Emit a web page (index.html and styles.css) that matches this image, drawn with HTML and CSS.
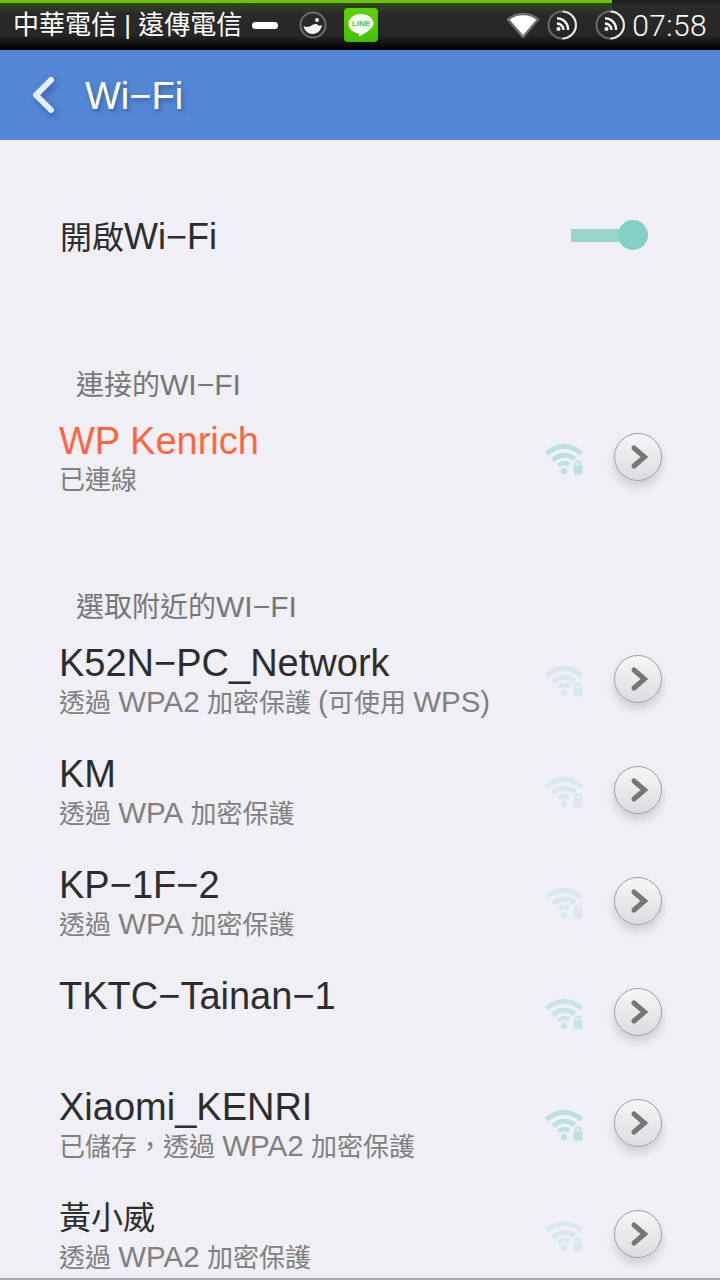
FILE: index.html
```html
<!DOCTYPE html>
<html lang="zh-Hant">
<head>
<meta charset="UTF-8" />
<meta name="viewport" content="width=device-width, initial-scale=1" />
<title>Wi-Fi</title>
<link rel="stylesheet" href="styles.css">
</head>
<body>

<svg class="defs" width="0" height="0">
  <symbol id="wifiLock" viewBox="0 0 40 34">
    <g fill="none" stroke="currentColor" stroke-linecap="butt">
      <path d="M2.5 10.5Q20 -4 37.500 10.500" stroke-width="5" />
      <path d="M9 17Q20 8 31 16" stroke-width="5" />
      <path d="M14.500 22.500Q20 18 25 21.500" stroke-width="4.500" />
    </g>
    <circle cx="20" cy="28" r="3.200" fill="currentColor" />
    <path fill="currentColor" d="M30.500 22.500v-1.500a3.500 3.500 0 0 1 7 0v1.500a1.500 1.500 0 0 1 1 1.500v5.500a2 2 0 0 1-2 2h-5a2 2 0 0 1-2-2V24a1.500 1.500 0 0 1 1-1.500zm2 0h3v-1.500a1.500 1.500 0 0 0-3 0z" />
  </symbol>
  <symbol id="chevron" viewBox="0 0 48 48">
    <path d="M20 15l10.500 9-10.500 9" fill="none" stroke="#767676" stroke-width="5" stroke-linecap="round" stroke-linejoin="miter" />
  </symbol>
  <symbol id="rss" viewBox="0 0 30 30">
    <circle cx="15" cy="15" r="13.500" fill="none" stroke="#6a6a6a" stroke-width="2" />
    <path d="M15.500 1.500A13.500 13.500 0 0 1 15.500 28.500" fill="none" stroke="#e8e8e8" stroke-width="2" />
    <g fill="none" stroke="#fff" stroke-width="2.300">
      <path d="M10 8.500c6-.5 11.500 5 11 11.500" />
      <path d="M10 13.500c3.500 0 6.500 3 6.500 6.500" />
    </g>
    <circle cx="11.500" cy="19" r="2" fill="#fff" />
  </symbol>
</svg>

<div class="page">

  <div class="status-bar">
    <div class="progress"></div>
    <span class="carrier">中華電信 | 遠傳電信</span>
    <span class="dash"></span>
    <svg class="ic-eye" width="28" height="28" viewBox="0 0 28 28">
      <circle cx="14" cy="14" r="12.500" fill="none" stroke="#6e6e6e" stroke-width="2" />
      <path d="M4.500 15c3 1.500 5.500 1 8-.5s5-2 6.500-.5c1 1 2.500 1 4 0-.5 5-4.500 9-9.500 9-4.500 0-8-3.200-9-8z" fill="#f2f2f2" />
      <circle cx="18" cy="9" r="2" fill="#f2f2f2" />
    </svg>
    <span class="line-badge">
      <svg width="30" height="28" viewBox="0 0 30 28">
        <path d="M15 3C7.800 3 2.500 7.300 2.500 12.800c0 4.900 4.200 8.900 9.900 9.700.8.200.6.900.4 2.200 0 .6.500.8 1.300.3 2.500-1.500 12.900-6.500 13.400-12.200C27.500 7.300 22.200 3 15 3z" fill="#fff" />
      </svg>
      <span class="line-text">LINE</span>
    </span>
    <svg class="ic-signal" width="36" height="30" viewBox="0 0 36 30">
      <path d="M18 27L3 9.500C11 2 25 2 33 9.500z" fill="#fff" stroke="#6e6e6e" stroke-width="2.500" stroke-linejoin="round" />
    </svg>
    <svg class="ic-rss-a" width="30" height="30"><use href="#rss" /></svg>
    <svg class="ic-rss-b" width="30" height="30"><use href="#rss" /></svg>
    <span class="clock">07:58</span>
  </div>

  <div class="app-bar">
    <svg class="back" width="26" height="38" viewBox="0 0 26 38">
      <path d="M21 4L6 19l15 15" fill="none" stroke="#e6eefa" stroke-width="6" stroke-linecap="round" stroke-linejoin="round" />
    </svg>
    <span class="app-title">Wi−Fi</span>
  </div>

  <div class="toggle-row">
    <span class="toggle-label">開啟<span class="lat">Wi−Fi</span></span>
    <span class="switch"><span class="switch-track"></span><span class="switch-knob"></span></span>
  </div>

  <div class="section-label first">連接的<span class="lat">WI−FI</span></div>

  <div class="net-row">
    <div class="net-text">
      <div class="net-name connected">WP Kenrich</div>
      <div class="net-sub">已連線</div>
    </div>
    <svg class="wifi mid" width="40" height="34"><use href="#wifiLock" /></svg>
    <span class="more"><svg width="48" height="48"><use href="#chevron" /></svg></span>
  </div>

  <div class="section-label">選取附近的<span class="lat">WI−FI</span></div>

  <div class="net-row">
    <div class="net-text">
      <div class="net-name">K52N−PC_Network</div>
      <div class="net-sub">透過 <span class="lat">WPA2</span> 加密保護 <span class="lat">(</span>可使用 <span class="lat">WPS)</span></div>
    </div>
    <svg class="wifi weak" width="40" height="34"><use href="#wifiLock" /></svg>
    <span class="more"><svg width="48" height="48"><use href="#chevron" /></svg></span>
  </div>

  <div class="net-row">
    <div class="net-text">
      <div class="net-name">KM</div>
      <div class="net-sub">透過 <span class="lat">WPA</span> 加密保護</div>
    </div>
    <svg class="wifi weak" width="40" height="34"><use href="#wifiLock" /></svg>
    <span class="more"><svg width="48" height="48"><use href="#chevron" /></svg></span>
  </div>

  <div class="net-row">
    <div class="net-text">
      <div class="net-name">KP−1F−2</div>
      <div class="net-sub">透過 <span class="lat">WPA</span> 加密保護</div>
    </div>
    <svg class="wifi weak" width="40" height="34"><use href="#wifiLock" /></svg>
    <span class="more"><svg width="48" height="48"><use href="#chevron" /></svg></span>
  </div>

  <div class="net-row">
    <div class="net-text">
      <div class="net-name">TKTC−Tainan−1</div>
    </div>
    <svg class="wifi soft" width="40" height="34"><use href="#wifiLock" /></svg>
    <span class="more"><svg width="48" height="48"><use href="#chevron" /></svg></span>
  </div>

  <div class="net-row">
    <div class="net-text">
      <div class="net-name">Xiaomi_KENRI</div>
      <div class="net-sub">已儲存，透過 <span class="lat">WPA2</span> 加密保護</div>
    </div>
    <svg class="wifi mid" width="40" height="34"><use href="#wifiLock" /></svg>
    <span class="more"><svg width="48" height="48"><use href="#chevron" /></svg></span>
  </div>

  <div class="net-row">
    <div class="net-text">
      <div class="net-name cjk">黃小威</div>
      <div class="net-sub">透過 <span class="lat">WPA2</span> 加密保護</div>
    </div>
    <svg class="wifi weak" width="40" height="34"><use href="#wifiLock" /></svg>
    <span class="more"><svg width="48" height="48"><use href="#chevron" /></svg></span>
  </div>

</div>

</body>
</html>
```

FILE: styles.css
```css
html, body {
  margin: 0;
  padding: 0;
}
body {
  font-family: "Liberation Sans", "Noto Sans CJK TC", sans-serif;
  background: #efeff5;
}
.defs {
  position: absolute;
}
.page {
  height: 1280px;
  overflow: hidden;
  position: relative;
  box-sizing: border-box;
  border-bottom: 2px solid #a9a9ad;
}

/* status bar */
.status-bar {
  height: 50px;
  position: relative;
  display: flex;
  align-items: center;
  box-sizing: border-box;
  padding-left: 13px;
  background: linear-gradient(#1c1c1c 0, #2a2a2a 12%, #272727 70%, #000 100%);
  color: #fff;
}
.progress {
  position: absolute;
  left: 0;
  top: 0;
  width: 612px;
  height: 14px;
  background: linear-gradient(#66c800 0, #66c800 3px, rgba(70, 110, 20, 0.45) 3px, rgba(40, 50, 30, 0) 100%);
}
.carrier {
  font-size: 26px;
  line-height: 50px;
  white-space: nowrap;
  position: relative;
}
.dash {
  width: 26px;
  height: 7px;
  margin-left: 10px;
  background: #fff;
  border-radius: 4px;
}
.ic-eye {
  margin-left: 21px;
}
.line-badge {
  width: 34px;
  height: 34px;
  margin-left: 17px;
  background: linear-gradient(#5ad400, #45c000);
  border-radius: 4px;
  position: relative;
  display: flex;
  align-items: center;
  justify-content: center;
}
.line-badge svg {
  display: block;
}
.line-text {
  position: absolute;
  left: 0;
  right: 0;
  top: 10px;
  text-align: center;
  font-size: 8px;
  line-height: 11px;
  font-weight: bold;
  color: #4fcb00;
}
.ic-signal {
  margin-left: 127px;
}
.ic-rss-a {
  margin-left: 6px;
}
.ic-rss-b {
  margin-left: 18px;
}
.clock {
  margin-left: 7px;
  font-family: Roboto, "Liberation Sans", sans-serif;
  font-weight: 300;
  font-size: 30px;
  letter-spacing: 0.4px;
}

/* blue bar */
.app-bar {
  height: 90px;
  background: #5486d6;
  display: flex;
  align-items: center;
  padding-left: 30px;
}
.back {
  filter: drop-shadow(3px 4px 3px rgba(30, 60, 120, 0.45));
}
.app-title {
  margin-left: 29px;
  padding-top: 3px;
  color: #fff;
  font-size: 38px;
  text-shadow: 2px 3px 4px rgba(30, 60, 120, 0.5);
}

/* toggle */
.toggle-row {
  height: 228px;
  box-sizing: border-box;
  padding: 0 72px 38px 60px;
  display: flex;
  align-items: center;
  justify-content: space-between;
}
.toggle-label {
  font-size: 32px;
  color: #2d2d2d;
}
.toggle-label .lat {
  font-size: 36px;
}
.switch {
  width: 77px;
  height: 30px;
  position: relative;
  display: block;
}
.switch-track {
  position: absolute;
  left: 0;
  top: 9px;
  width: 65px;
  height: 13px;
  background: #98d5cc;
}
.switch-knob {
  position: absolute;
  right: 0;
  top: 0;
  width: 30px;
  height: 30px;
  border-radius: 50%;
  background: #84d0c5;
}

/* lists */
.section-label {
  height: 34px;
  line-height: 34px;
  margin-top: 77px;
  padding-left: 76px;
  font-size: 28px;
  color: #777;
}
.section-label .lat {
  font-size: 30px;
}
.section-label.first {
  margin-top: 0;
}
.net-row {
  height: 111px;
  box-sizing: border-box;
  padding: 19px 58px 0 59px;
  display: flex;
  align-items: flex-start;
}
.net-text {
  flex: 1;
}
.net-name {
  font-size: 38px;
  line-height: 40px;
  color: #2d2d2d;
  white-space: nowrap;
}
.net-name.cjk {
  font-size: 32px;
}
.net-name.connected {
  color: #ff6640;
}
.net-sub {
  height: 38px;
  font-size: 26px;
  line-height: 38px;
  color: #808080;
  white-space: nowrap;
}
.net-sub .lat {
  font-size: 29.500px;
}
.wifi {
  margin-top: 22px;
  margin-right: 30px;
  color: #7fd0c6;
}
.wifi.mid {
  opacity: 0.45;
}
.wifi.soft {
  opacity: 0.32;
}
.wifi.weak {
  opacity: 0.2;
}
.more {
  width: 48px;
  height: 48px;
  margin-top: 12px;
  box-sizing: border-box;
  border-radius: 50%;
  border: 1px solid #a0a0a2;
  background: linear-gradient(#f6f6f8, #dcdce0);
  box-shadow: 0 6px 10px rgba(0, 0, 0, 0.14);
  display: flex;
  align-items: center;
  justify-content: center;
}
.more svg {
  flex: none;
}
```
